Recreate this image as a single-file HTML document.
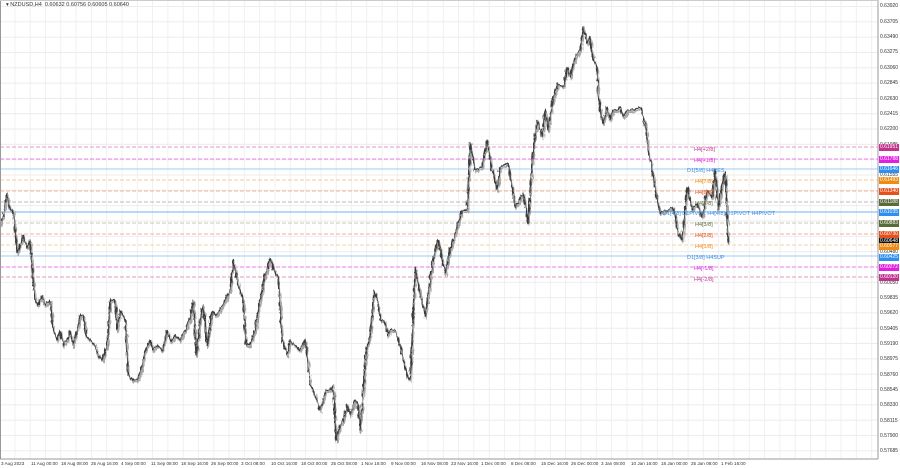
<!DOCTYPE html>
<html><head><meta charset="utf-8"><style>
body{margin:0;width:900px;height:468px;background:#fff;overflow:hidden;font-family:"Liberation Sans",sans-serif;position:relative}
.ax{position:absolute;font-size:5px;color:#333;white-space:nowrap}
.tx{position:absolute;top:461px;font-size:4.6px;color:#333;white-space:nowrap}
.lb{position:absolute;left:879px;width:20px;height:7px;font-size:5px;line-height:7px;color:#fff;text-align:center}
.lt{position:absolute;font-size:5.5px;white-space:nowrap}
</style></head><body>
<svg width="900" height="468" style="position:absolute;left:0;top:0">
<defs>
<pattern id="gv" width="15.3" height="468" patternUnits="userSpaceOnUse" x="0"><line x1="15" y1="0" x2="15" y2="468" stroke="#ececec" stroke-width="1"/></pattern>
<pattern id="gh" width="900" height="15.32" patternUnits="userSpaceOnUse" y="6"><line x1="0" y1="0.5" x2="900" y2="0.5" stroke="#ececec" stroke-width="1"/></pattern>
<filter id="jit" x="-5%" y="-5%" width="110%" height="110%"><feTurbulence type="fractalNoise" baseFrequency="0.6 0.15" numOctaves="2" seed="3"/><feDisplacementMap in="SourceGraphic" scale="4" xChannelSelector="R" yChannelSelector="G"/></filter>
</defs>
<rect x="0" y="0" width="878" height="459" fill="url(#gv)"/>
<rect x="0" y="0" width="878" height="459" fill="url(#gh)"/>
<g stroke-width="1">
<line x1="0" y1="147" x2="878" y2="147" stroke="#e39ac4" stroke-dasharray="4,2"/>
<line x1="0" y1="159" x2="878" y2="159" stroke="#f07cf0" stroke-dasharray="4,2"/>
<line x1="0" y1="169" x2="878" y2="169" stroke="#9ccbf5"/>
<line x1="0" y1="180" x2="878" y2="180" stroke="#f7c98f" stroke-dasharray="4,2"/>
<line x1="0" y1="191" x2="878" y2="191" stroke="#f6b39a" stroke-dasharray="4,2"/>
<line x1="0" y1="202" x2="878" y2="202" stroke="#bbbbbb" stroke-dasharray="4,2"/>
<line x1="0" y1="212" x2="878" y2="212" stroke="#72b2ef"/>
<line x1="0" y1="223" x2="878" y2="223" stroke="#c8c8b0" stroke-dasharray="4,2"/>
<line x1="0" y1="234" x2="878" y2="234" stroke="#f6b1a0" stroke-dasharray="4,2"/>
<line x1="0" y1="245" x2="878" y2="245" stroke="#f7d2a0" stroke-dasharray="4,2"/>
<line x1="0" y1="256" x2="878" y2="256" stroke="#9ccbf5"/>
<line x1="0" y1="267" x2="878" y2="267" stroke="#f07cf0" stroke-dasharray="4,2"/>
<line x1="0" y1="277" x2="878" y2="277" stroke="#e39ac4" stroke-dasharray="4,2"/>
</g>
<g filter="url(#jit)">
<polyline fill="none" stroke="#a8a8a8" stroke-width="2" stroke-linejoin="round" transform="translate(1,2)" points="0,225 3,215 7,193 10,210 13,210 17,253 20,245 23,235 27,248 30,240 32,270 35,300 38,305 42,295 45,305 50,300 53,330 57,340 60,330 63,345 67,340 70,330 73,345 77,330 80,315 83,315 86,335 90,340 95,345 98,355 102,360 107,345 110,300 115,300 117,330 120,310 125,320 128,375 133,380 137,380 141,370 145,350 150,340 153,350 157,345 162,350 165,340 167,330 171,342 175,335 180,340 185,330 190,318 193,300 196,355 200,320 203,305 207,345 212,310 216,315 220,310 225,300 230,290 233,260 238,285 243,300 246,345 250,345 255,330 258,310 262,290 265,275 270,258 274,270 278,278 282,340 287,355 290,340 295,345 300,350 305,340 310,385 315,395 320,410 323,400 326,390 330,390 333,385 336,440 340,425 343,420 347,405 350,415 355,400 358,405 360,430 363,390 366,350 370,335 374,290 377,300 380,320 384,320 388,335 390,330 395,330 400,345 403,360 407,375 410,380 412,340 415,267 420,293 425,317 433,257 438,240 445,273 450,250 457,227 462,210 467,210 470,143 475,170 482,167 487,140 490,160 497,190 500,167 508,163 515,207 523,193 528,223 532,160 537,120 542,137 545,110 548,130 553,97 558,83 563,87 567,67 570,77 575,57 580,50 583,27 587,43 590,37 593,60 597,67 598,93 600,110 603,123 607,107 610,120 613,110 617,110 620,107 623,117 627,110 633,110 640,107 645,123 648,150 652,170 655,190 660,213 667,210 673,207 678,233 682,240 687,187 692,210 697,203 702,217 707,190 712,197 715,170 718,210 722,183 725,173 728,243"/>
<polyline fill="none" stroke="#3a3a3a" stroke-width="1.3" stroke-linejoin="round" points="0,225 3,215 7,193 10,210 13,210 17,253 20,245 23,235 27,248 30,240 32,270 35,300 38,305 42,295 45,305 50,300 53,330 57,340 60,330 63,345 67,340 70,330 73,345 77,330 80,315 83,315 86,335 90,340 95,345 98,355 102,360 107,345 110,300 115,300 117,330 120,310 125,320 128,375 133,380 137,380 141,370 145,350 150,340 153,350 157,345 162,350 165,340 167,330 171,342 175,335 180,340 185,330 190,318 193,300 196,355 200,320 203,305 207,345 212,310 216,315 220,310 225,300 230,290 233,260 238,285 243,300 246,345 250,345 255,330 258,310 262,290 265,275 270,258 274,270 278,278 282,340 287,355 290,340 295,345 300,350 305,340 310,385 315,395 320,410 323,400 326,390 330,390 333,385 336,440 340,425 343,420 347,405 350,415 355,400 358,405 360,430 363,390 366,350 370,335 374,290 377,300 380,320 384,320 388,335 390,330 395,330 400,345 403,360 407,375 410,380 412,340 415,267 420,293 425,317 433,257 438,240 445,273 450,250 457,227 462,210 467,210 470,143 475,170 482,167 487,140 490,160 497,190 500,167 508,163 515,207 523,193 528,223 532,160 537,120 542,137 545,110 548,130 553,97 558,83 563,87 567,67 570,77 575,57 580,50 583,27 587,43 590,37 593,60 597,67 598,93 600,110 603,123 607,107 610,120 613,110 617,110 620,107 623,117 627,110 633,110 640,107 645,123 648,150 652,170 655,190 660,213 667,210 673,207 678,233 682,240 687,187 692,210 697,203 702,217 707,190 712,197 715,170 718,210 722,183 725,173 728,243"/>
</g>
<line x1="878" y1="0" x2="878" y2="459" stroke="#999"/>
<line x1="0" y1="459" x2="878" y2="459" stroke="#999"/>
<line x1="0.5" y1="0" x2="0.5" y2="459" stroke="#999"/>
<line x1="0" y1="0.5" x2="878" y2="0.5" stroke="#ccc"/>
</svg>
<div class="ax" style="left:6px;top:2px;font-size:5.5px">▾ NZDUSD,H4&nbsp; 0.60632 0.60756 0.60605 0.60640</div>

<div class="lt" style="left:694px;top:147px;color:#c2338f">H4[+2/8]</div>
<div class="lt" style="left:694px;top:158px;color:#e020e0">H4[+1/8]</div>
<div class="lt" style="left:687px;top:168px;color:#3d8fe0">D1[5/8] H4RES</div>
<div class="lt" style="left:695px;top:179px;color:#f08a10">H4[7/8]</div>
<div class="lt" style="left:695px;top:190px;color:#e8501a">H4[6/8]</div>
<div class="lt" style="left:695px;top:201px;color:#607040">H4[4/8]</div>
<div class="lt" style="left:663px;top:211px;color:#3d8fe0">D1[4/8] D1PIVOT H4[4/8] D1PIVOT H4PIVOT</div>
<div class="lt" style="left:695px;top:222px;color:#607040">H4[3/8]</div>
<div class="lt" style="left:695px;top:233px;color:#e8501a">H4[2/8]</div>
<div class="lt" style="left:695px;top:244px;color:#f08a10">H4[1/8]</div>
<div class="lt" style="left:687px;top:255px;color:#3d8fe0">D1[3/8] H4SUP</div>
<div class="lt" style="left:694px;top:266px;color:#e020e0">H4[-1/8]</div>
<div class="lt" style="left:694px;top:277px;color:#c2338f">H4[-2/8]</div>

<div class="ax" style="left:880px;top:3px">0.63920</div>
<div class="ax" style="left:880px;top:19px">0.63705</div>
<div class="ax" style="left:880px;top:34px">0.63490</div>
<div class="ax" style="left:880px;top:49px">0.63275</div>
<div class="ax" style="left:880px;top:65px">0.63060</div>
<div class="ax" style="left:880px;top:80px">0.62845</div>
<div class="ax" style="left:880px;top:96px">0.62630</div>
<div class="ax" style="left:880px;top:111px">0.62415</div>
<div class="ax" style="left:880px;top:126px">0.62200</div>
<div class="ax" style="left:880px;top:142px">0.61985</div>
<div class="ax" style="left:880px;top:172px">0.61555</div>
<div class="ax" style="left:880px;top:249px">0.60480</div>
<div class="ax" style="left:880px;top:280px">0.60050</div>
<div class="ax" style="left:880px;top:295px">0.59835</div>
<div class="ax" style="left:880px;top:310px">0.59620</div>
<div class="ax" style="left:880px;top:326px">0.59405</div>
<div class="ax" style="left:880px;top:341px">0.59190</div>
<div class="ax" style="left:880px;top:356px">0.58975</div>
<div class="ax" style="left:880px;top:372px">0.58760</div>
<div class="ax" style="left:880px;top:387px">0.58545</div>
<div class="ax" style="left:880px;top:402px">0.58330</div>
<div class="ax" style="left:880px;top:418px">0.58115</div>
<div class="ax" style="left:880px;top:433px">0.57900</div>
<div class="ax" style="left:880px;top:448px">0.57685</div>

<div class="lb" style="top:144px;background:#c2338f">0.61951</div>
<div class="lb" style="top:156px;background:#e020e0">0.61788</div>
<div class="lb" style="top:166px;background:#2d8ff0">0.61646</div>
<div class="lb" style="top:177px;background:#f08a10">0.61493</div>
<div class="lb" style="top:188px;background:#e8501a">0.61340</div>
<div class="lb" style="top:199px;background:#5a6b3a">0.61188</div>
<div class="lb" style="top:209px;background:#2d8ff0">0.61035</div>
<div class="lb" style="top:220px;background:#5a6b3a">0.60883</div>
<div class="lb" style="top:231px;background:#e8501a">0.60730</div>
<div class="lb" style="top:238px;background:#111">0.60648</div>
<div class="lb" style="top:243px;background:#f08a10">0.60577</div>
<div class="lb" style="top:254px;background:#2d8ff0">0.60425</div>
<div class="lb" style="top:264px;background:#e020e0">0.60272</div>
<div class="lb" style="top:274px;background:#c2338f">0.60120</div>

<div class="tx" style="left:1px">3 Aug 2023</div>
<div class="tx" style="left:31px">11 Aug 00:00</div>
<div class="tx" style="left:61px">18 Aug 08:00</div>
<div class="tx" style="left:91px">25 Aug 16:00</div>
<div class="tx" style="left:121px">4 Sep 00:00</div>
<div class="tx" style="left:151px">11 Sep 08:00</div>
<div class="tx" style="left:181px">18 Sep 16:00</div>
<div class="tx" style="left:211px">26 Sep 00:00</div>
<div class="tx" style="left:241px">3 Oct 08:00</div>
<div class="tx" style="left:271px">10 Oct 16:00</div>
<div class="tx" style="left:301px">18 Oct 00:00</div>
<div class="tx" style="left:331px">25 Oct 08:00</div>
<div class="tx" style="left:361px">1 Nov 16:00</div>
<div class="tx" style="left:391px">9 Nov 00:00</div>
<div class="tx" style="left:421px">16 Nov 08:00</div>
<div class="tx" style="left:451px">23 Nov 16:00</div>
<div class="tx" style="left:481px">1 Dec 00:00</div>
<div class="tx" style="left:511px">8 Dec 08:00</div>
<div class="tx" style="left:541px">15 Dec 16:00</div>
<div class="tx" style="left:571px">26 Dec 00:00</div>
<div class="tx" style="left:601px">3 Jan 08:00</div>
<div class="tx" style="left:631px">10 Jan 16:00</div>
<div class="tx" style="left:661px">18 Jan 00:00</div>
<div class="tx" style="left:691px">25 Jan 08:00</div>
<div class="tx" style="left:721px">1 Feb 16:00</div>
</body></html>
